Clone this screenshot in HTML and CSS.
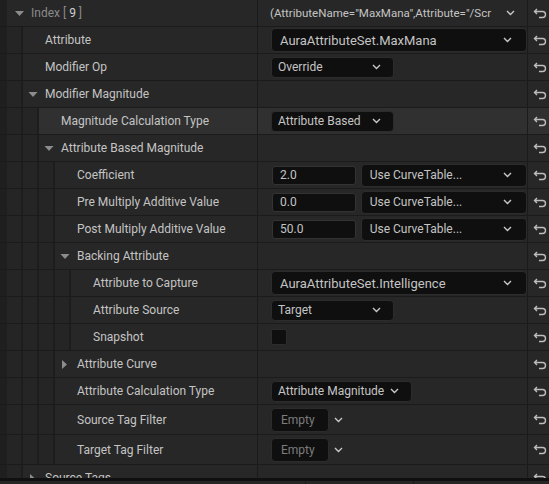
FILE: index.html
```html
<!DOCTYPE html>
<html lang="en">
<head>
    <meta charset="UTF-8">
    <meta name="viewport" content="width=device-width, initial-scale=1.0">
    <title>Details</title>
    <link rel="stylesheet" href="styles.css">
</head>
<body>
    <div class="panel">
        <div class="row">
            <div class="name"><span class="g0"></span>
                <div class="label index-label"><svg class="arrow" width="9" height="9" viewBox="0 0 9 9"><polygon points="0,2 9,2 4.5,7" fill="#8c8c8c"/></svg><span class="dim">Index [</span>&nbsp;<span class="bright">9</span>&nbsp;<span class="dim">]</span></div>
            </div>
            <div class="value head-value">
                <span class="struct-text">(AttributeName="MaxMana",Attribute="/Scr</span>
                <svg class="chev" width="9" height="6" viewBox="0 0 9 6"><polyline points="1,1 4.5,4.5 8,1"/></svg>
            </div>
            <div class="reset"><svg class="reset-icon" width="14" height="11" viewBox="0 0 14 11"><path d="M1.5 3.5 H9.5 A3 3 0 0 1 9.5 9.5 H6 M4 1 L1.5 3.5 L4 6"/></svg></div>
        </div>

        <div class="row">
            <div class="name"><span class="g0"></span><span class="g"></span>
                <div class="label">Attribute</div>
            </div>
            <div class="value">
                <div class="combo combo-wide"><span>AuraAttributeSet.MaxMana</span><svg class="chev" width="9" height="6" viewBox="0 0 9 6"><polyline points="1,1 4.5,4.5 8,1"/></svg></div>
            </div>
            <div class="reset"><svg class="reset-icon" width="14" height="11" viewBox="0 0 14 11"><path d="M1.5 3.5 H9.5 A3 3 0 0 1 9.5 9.5 H6 M4 1 L1.5 3.5 L4 6"/></svg></div>
        </div>

        <div class="row">
            <div class="name"><span class="g0"></span><span class="g"></span>
                <div class="label">Modifier Op</div>
            </div>
            <div class="value">
                <div class="combo combo-small"><span>Override</span><svg class="chev" width="9" height="6" viewBox="0 0 9 6"><polyline points="1,1 4.5,4.5 8,1"/></svg></div>
            </div>
            <div class="reset"><svg class="reset-icon" width="14" height="11" viewBox="0 0 14 11"><path d="M1.5 3.5 H9.5 A3 3 0 0 1 9.5 9.5 H6 M4 1 L1.5 3.5 L4 6"/></svg></div>
        </div>

        <div class="row">
            <div class="name"><span class="g0"></span><span class="g"></span>
                <div class="label has-arrow"><svg class="arrow" width="10" height="9" viewBox="0 0 10 9"><polygon points="0.5,2 9.5,2 5,7" fill="#8c8c8c"/></svg>Modifier Magnitude</div>
            </div>
            <div class="value"></div>
            <div class="reset"><svg class="reset-icon" width="14" height="11" viewBox="0 0 14 11"><path d="M1.5 3.5 H9.5 A3 3 0 0 1 9.5 9.5 H6 M4 1 L1.5 3.5 L4 6"/></svg></div>
        </div>

        <div class="row selected">
            <div class="name"><span class="g0"></span><span class="g"></span><span class="g"></span>
                <div class="label">Magnitude Calculation Type</div>
            </div>
            <div class="value">
                <div class="combo combo-small"><span>Attribute Based</span><svg class="chev" width="9" height="6" viewBox="0 0 9 6"><polyline points="1,1 4.5,4.5 8,1"/></svg></div>
            </div>
            <div class="reset"><svg class="reset-icon" width="14" height="11" viewBox="0 0 14 11"><path d="M1.5 3.5 H9.5 A3 3 0 0 1 9.5 9.5 H6 M4 1 L1.5 3.5 L4 6"/></svg></div>
        </div>

        <div class="row">
            <div class="name"><span class="g0"></span><span class="g"></span><span class="g"></span>
                <div class="label has-arrow"><svg class="arrow" width="10" height="9" viewBox="0 0 10 9"><polygon points="0.5,2 9.5,2 5,7" fill="#8c8c8c"/></svg>Attribute Based Magnitude</div>
            </div>
            <div class="value"></div>
            <div class="reset"><svg class="reset-icon" width="14" height="11" viewBox="0 0 14 11"><path d="M1.5 3.5 H9.5 A3 3 0 0 1 9.5 9.5 H6 M4 1 L1.5 3.5 L4 6"/></svg></div>
        </div>

        <div class="row">
            <div class="name"><span class="g0"></span><span class="g"></span><span class="g"></span><span class="g"></span>
                <div class="label">Coefficient</div>
            </div>
            <div class="value">
                <div class="num">2.0</div>
                <div class="combo combo-curve"><span>Use CurveTable...</span><svg class="chev" width="9" height="6" viewBox="0 0 9 6"><polyline points="1,1 4.5,4.5 8,1"/></svg></div>
            </div>
            <div class="reset"><svg class="reset-icon" width="14" height="11" viewBox="0 0 14 11"><path d="M1.5 3.5 H9.5 A3 3 0 0 1 9.5 9.5 H6 M4 1 L1.5 3.5 L4 6"/></svg></div>
        </div>

        <div class="row">
            <div class="name"><span class="g0"></span><span class="g"></span><span class="g"></span><span class="g"></span>
                <div class="label">Pre Multiply Additive Value</div>
            </div>
            <div class="value">
                <div class="num">0.0</div>
                <div class="combo combo-curve"><span>Use CurveTable...</span><svg class="chev" width="9" height="6" viewBox="0 0 9 6"><polyline points="1,1 4.5,4.5 8,1"/></svg></div>
            </div>
            <div class="reset"><svg class="reset-icon" width="14" height="11" viewBox="0 0 14 11"><path d="M1.5 3.5 H9.5 A3 3 0 0 1 9.5 9.5 H6 M4 1 L1.5 3.5 L4 6"/></svg></div>
        </div>

        <div class="row">
            <div class="name"><span class="g0"></span><span class="g"></span><span class="g"></span><span class="g"></span>
                <div class="label">Post Multiply Additive Value</div>
            </div>
            <div class="value">
                <div class="num">50.0</div>
                <div class="combo combo-curve"><span>Use CurveTable...</span><svg class="chev" width="9" height="6" viewBox="0 0 9 6"><polyline points="1,1 4.5,4.5 8,1"/></svg></div>
            </div>
            <div class="reset"><svg class="reset-icon" width="14" height="11" viewBox="0 0 14 11"><path d="M1.5 3.5 H9.5 A3 3 0 0 1 9.5 9.5 H6 M4 1 L1.5 3.5 L4 6"/></svg></div>
        </div>

        <div class="row">
            <div class="name"><span class="g0"></span><span class="g"></span><span class="g"></span><span class="g"></span>
                <div class="label has-arrow"><svg class="arrow" width="10" height="9" viewBox="0 0 10 9"><polygon points="0.5,2 9.5,2 5,7" fill="#8c8c8c"/></svg>Backing Attribute</div>
            </div>
            <div class="value"></div>
            <div class="reset"><svg class="reset-icon" width="14" height="11" viewBox="0 0 14 11"><path d="M1.5 3.5 H9.5 A3 3 0 0 1 9.5 9.5 H6 M4 1 L1.5 3.5 L4 6"/></svg></div>
        </div>

        <div class="row">
            <div class="name"><span class="g0"></span><span class="g"></span><span class="g"></span><span class="g"></span><span class="g"></span>
                <div class="label">Attribute to Capture</div>
            </div>
            <div class="value">
                <div class="combo combo-wide"><span>AuraAttributeSet.Intelligence</span><svg class="chev" width="9" height="6" viewBox="0 0 9 6"><polyline points="1,1 4.5,4.5 8,1"/></svg></div>
            </div>
            <div class="reset"><svg class="reset-icon" width="14" height="11" viewBox="0 0 14 11"><path d="M1.5 3.5 H9.5 A3 3 0 0 1 9.5 9.5 H6 M4 1 L1.5 3.5 L4 6"/></svg></div>
        </div>

        <div class="row">
            <div class="name"><span class="g0"></span><span class="g"></span><span class="g"></span><span class="g"></span><span class="g"></span>
                <div class="label">Attribute Source</div>
            </div>
            <div class="value">
                <div class="combo combo-small"><span>Target</span><svg class="chev" width="9" height="6" viewBox="0 0 9 6"><polyline points="1,1 4.5,4.5 8,1"/></svg></div>
            </div>
            <div class="reset"><svg class="reset-icon" width="14" height="11" viewBox="0 0 14 11"><path d="M1.5 3.5 H9.5 A3 3 0 0 1 9.5 9.5 H6 M4 1 L1.5 3.5 L4 6"/></svg></div>
        </div>

        <div class="row">
            <div class="name"><span class="g0"></span><span class="g"></span><span class="g"></span><span class="g"></span><span class="g"></span>
                <div class="label">Snapshot</div>
            </div>
            <div class="value">
                <div class="checkbox"></div>
            </div>
            <div class="reset"><svg class="reset-icon" width="14" height="11" viewBox="0 0 14 11"><path d="M1.5 3.5 H9.5 A3 3 0 0 1 9.5 9.5 H6 M4 1 L1.5 3.5 L4 6"/></svg></div>
        </div>

        <div class="row">
            <div class="name"><span class="g0"></span><span class="g"></span><span class="g"></span><span class="g"></span>
                <div class="label has-arrow"><svg class="arrow" width="10" height="9" viewBox="0 0 10 9"><polygon points="2,0 7,4.5 2,9" fill="#8c8c8c"/></svg>Attribute Curve</div>
            </div>
            <div class="value"></div>
            <div class="reset"><svg class="reset-icon" width="14" height="11" viewBox="0 0 14 11"><path d="M1.5 3.5 H9.5 A3 3 0 0 1 9.5 9.5 H6 M4 1 L1.5 3.5 L4 6"/></svg></div>
        </div>

        <div class="row">
            <div class="name"><span class="g0"></span><span class="g"></span><span class="g"></span><span class="g"></span>
                <div class="label">Attribute Calculation Type</div>
            </div>
            <div class="value">
                <div class="combo combo-fit"><span>Attribute Magnitude</span><svg class="chev" width="9" height="6" viewBox="0 0 9 6"><polyline points="1,1 4.5,4.5 8,1"/></svg></div>
            </div>
            <div class="reset"><svg class="reset-icon" width="14" height="11" viewBox="0 0 14 11"><path d="M1.5 3.5 H9.5 A3 3 0 0 1 9.5 9.5 H6 M4 1 L1.5 3.5 L4 6"/></svg></div>
        </div>

        <div class="row tall">
            <div class="name"><span class="g0"></span><span class="g"></span><span class="g"></span><span class="g"></span>
                <div class="label">Source Tag Filter</div>
            </div>
            <div class="value">
                <div class="tag-box">Empty</div>
                <svg class="chev" width="9" height="6" viewBox="0 0 9 6"><polyline points="1,1 4.5,4.5 8,1"/></svg>
            </div>
            <div class="reset"><svg class="reset-icon" width="14" height="11" viewBox="0 0 14 11"><path d="M1.5 3.5 H9.5 A3 3 0 0 1 9.5 9.5 H6 M4 1 L1.5 3.5 L4 6"/></svg></div>
        </div>

        <div class="row tall">
            <div class="name"><span class="g0"></span><span class="g"></span><span class="g"></span><span class="g"></span>
                <div class="label">Target Tag Filter</div>
            </div>
            <div class="value">
                <div class="tag-box">Empty</div>
                <svg class="chev" width="9" height="6" viewBox="0 0 9 6"><polyline points="1,1 4.5,4.5 8,1"/></svg>
            </div>
            <div class="reset"><svg class="reset-icon" width="14" height="11" viewBox="0 0 14 11"><path d="M1.5 3.5 H9.5 A3 3 0 0 1 9.5 9.5 H6 M4 1 L1.5 3.5 L4 6"/></svg></div>
        </div>

        <div class="row">
            <div class="name"><span class="g0"></span><span class="g"></span>
                <div class="label has-arrow"><svg class="arrow" width="10" height="9" viewBox="0 0 10 9"><polygon points="2,0 7,4.5 2,9" fill="#8c8c8c"/></svg>Source Tags</div>
            </div>
            <div class="value"></div>
            <div class="reset"><svg class="reset-icon" width="14" height="11" viewBox="0 0 14 11"><path d="M1.5 3.5 H9.5 A3 3 0 0 1 9.5 9.5 H6 M4 1 L1.5 3.5 L4 6"/></svg></div>
        </div>
    </div>
    <div class="splitter"></div>
    <div class="next-panel">
        <span class="np-a"></span><span class="np-b"></span><span class="np-c"></span>
    </div>
</body>
</html>
```

FILE: styles.css
```css
body {
    margin: 0;
    padding: 0;
    background-color: #151515;
    font-family: Roboto, "Liberation Sans", sans-serif;
    font-size: 12px;
    color: #c4c4c4;
    overflow: hidden;
}
.panel {
    width: 549px;
    height: 478px;
    overflow: hidden;
    background: #262626;
}
.row {
    display: flex;
    height: 26px;
    border-bottom: 1px solid #1b1b1b;
    background: #272727;
}
.row.tall {
    height: 29px;
}
.row.selected {
    background: #303030;
}
.name {
    width: 257px;
    flex-shrink: 0;
    display: flex;
    border-right: 1px solid #1b1b1b;
}
.g0 {
    width: 7px;
    flex-shrink: 0;
    background: #1f1f1f;
}
.g {
    width: 14px;
    flex-shrink: 0;
    background: #252525;
    border-right: 2px solid #1d1d1d;
}
.label {
    flex: 1;
    display: flex;
    align-items: center;
    padding-left: 22px;
    white-space: nowrap;
}
.label.has-arrow {
    padding-left: 5px;
}
.index-label {
    padding-left: 8px;
}
.arrow {
    flex-shrink: 0;
    margin-right: 7px;
}
.dim {
    color: #8a8a8a;
}
.bright {
    color: #cfcfcf;
}
.value {
    flex: 1;
    display: flex;
    align-items: center;
    padding-left: 13px;
    gap: 5px;
    min-width: 0;
    border-right: 1px solid #1b1b1b;
}
.head-value {
    padding-left: 12px;
    padding-right: 12px;
    justify-content: space-between;
    gap: 0;
}
.struct-text {
    white-space: nowrap;
    font-size: 11.5px;
}
.reset {
    width: 16px;
    flex-shrink: 0;
    display: flex;
    align-items: center;
    padding-left: 5px;
    overflow: hidden;
}
.reset-icon {
    flex-shrink: 0;
}
.reset-icon path {
    fill: none;
    stroke: #bdbdbd;
    stroke-width: 1.4;
}
.chev {
    flex-shrink: 0;
}
.chev polyline {
    fill: none;
    stroke: #c8c8c8;
    stroke-width: 1.4;
}
.combo {
    box-sizing: border-box;
    display: flex;
    align-items: center;
    justify-content: space-between;
    background: #0f0f0f;
    border: 1px solid #2c2c2c;
    border-radius: 4px;
    white-space: nowrap;
}
.combo-wide {
    width: 257px;
    height: 24px;
    padding: 0 14px 0 8px;
    font-size: 13px;
}
.combo-small {
    width: 123px;
    height: 21px;
    padding: 0 12px 0 6px;
}
.combo-curve {
    width: 167px;
    height: 23px;
    padding: 0 14px 0 8px;
}
.combo-fit {
    height: 21px;
    padding: 0 12px 0 6px;
    justify-content: flex-start;
    gap: 6px;
}
.num {
    box-sizing: border-box;
    width: 84px;
    height: 19px;
    margin-left: 1px;
    background: #0f0f0f;
    border: 1px solid #333333;
    border-radius: 3px;
    padding-left: 7px;
    display: flex;
    align-items: center;
}
.checkbox {
    width: 14px;
    height: 14px;
    background: #0f0f0f;
    border: 1px solid #2c2c2c;
    border-radius: 2px;
}
.tag-box {
    box-sizing: border-box;
    width: 58px;
    height: 24px;
    background: #0f0f0f;
    border: 1px solid #2c2c2c;
    border-radius: 4px;
    padding-left: 9px;
    display: flex;
    align-items: center;
    color: #7d7d7d;
}
.splitter {
    height: 3px;
    background: #101010;
}
.next-panel {
    height: 3px;
    display: flex;
    background: #262626;
}
.np-a {
    width: 305px;
    border-right: 1px solid #1a1a1a;
}
.np-b {
    width: 107px;
    border-right: 1px solid #1a1a1a;
}
```
